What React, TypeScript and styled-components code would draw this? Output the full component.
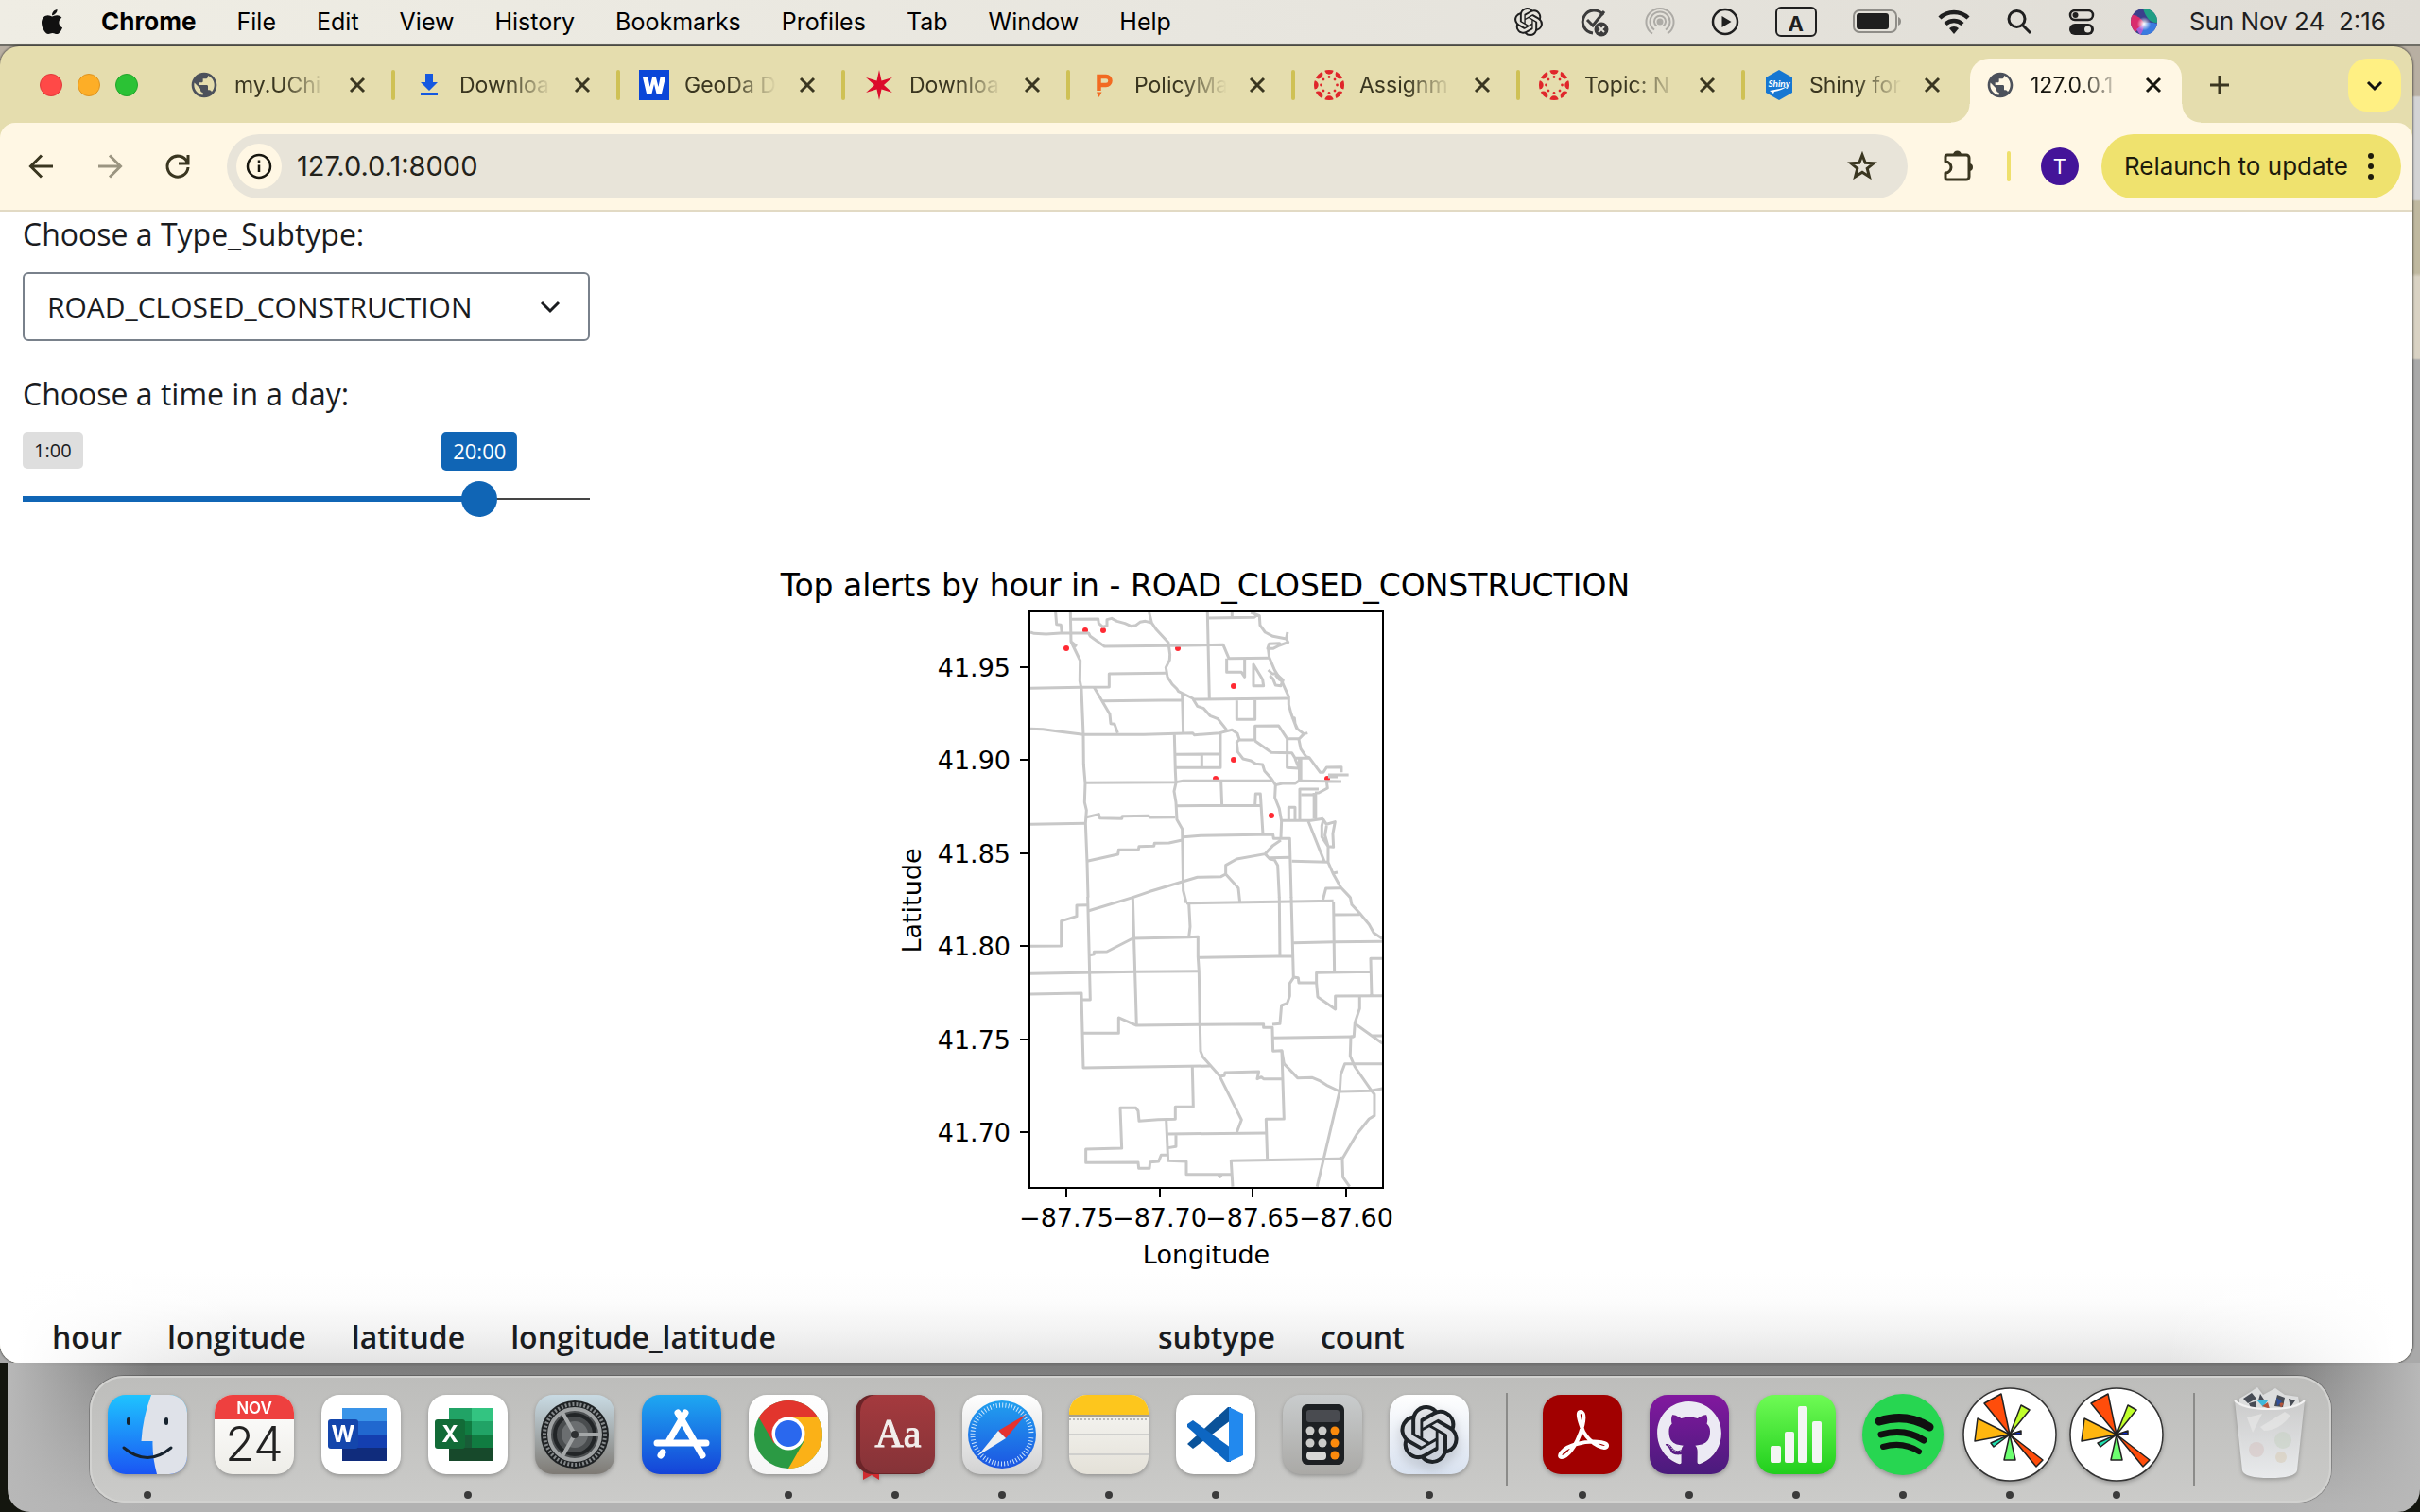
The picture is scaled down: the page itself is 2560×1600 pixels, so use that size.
import React, { useState } from "react";
import styled, { createGlobalStyle, css } from "styled-components";
import { FaApple, FaGithub } from "react-icons/fa";
import { SiOpenai } from "react-icons/si";
import { MdPublic } from "react-icons/md";

const ui = `Inter, "Liberation Sans", sans-serif`;
const body = `"Open Sans", "Noto Sans", sans-serif`;
const plotFont = `"DejaVu Sans", sans-serif`;

const GlobalStyle = createGlobalStyle`
  *, *::before, *::after { box-sizing: border-box; }
  body { margin: 0; font-family: ${ui}; color: #111; }
  button { font: inherit; color: inherit; border: 0; background: none; padding: 0; }
  svg { display: block; }
`;

/* ---------- desktop ---------- */

const Desktop = styled.div`
  min-height: 100vh;
  display: flex;
  flex-direction: column;
  background: #a9a9a9;
`;

const MenuBar = styled.header`
  flex: none;
  height: 49px;
  display: flex;
  align-items: center;
  justify-content: space-between;
  padding: 0 36px 2px 40px;
  border-bottom: 2px solid #6f6e66;
  background: linear-gradient(to right, #efede4, #e8e6df 50%, #dfdcd5);
  font-size: 25px;
  line-height: 32px;
`;

const MenuList = styled.nav`
  display: flex;
  align-items: center;
  gap: 43px;
`;

const AppleMenu = styled.button`
  margin-right: -6px;
`;

const MenuItem = styled.button<{ $bold?: boolean }>`
  font-size: ${(p) => (p.$bold ? 26 : 25)}px;
  font-weight: ${(p) => (p.$bold ? 700 : 400)};
  color: #000;
`;

const StatusList = styled.div`
  display: flex;
  align-items: center;
  gap: 38px;
  color: #1f1f1f;
`;

const Clock = styled.time`
  margin-left: -4px;
  font-size: 26px;
  white-space: pre;
`;

const InputSource = styled.span`
  width: 44px;
  height: 32px;
  border: 2px solid #1f1f1f;
  border-radius: 6px;
  display: grid;
  place-items: center;
  font-size: 22px;
  font-weight: 700;
`;

const WindowRow = styled.div`
  flex: 1;
  min-height: 0;
  display: flex;
  background: linear-gradient(to bottom, #b8afa2 0, #b8afa2 52px, #d3d3d4 54px, #d3d3d4 162px, #bfb89f 164px, #bfb89f 240px, #d9d2c3 244px, #d9d2c3 330px, #a9a9a9 332px);
`;

const BrowserWindow = styled.main`
  flex: 1;
  min-width: 0;
  margin-right: 8px;
  display: flex;
  flex-direction: column;
  border-radius: 20px;
  overflow: hidden;
  background: #e5ddae;
  box-shadow: 0 0 2px 1px rgba(0, 0, 0, 0.45);
`;

/* ---------- tab strip ---------- */

const TabStrip = styled.div`
  flex: none;
  height: 81px;
  display: flex;
  align-items: center;
  padding: 0 12px 0 42px;
`;

const Lights = styled.div`
  display: flex;
  gap: 16px;
  width: 138px;
`;

const Light = styled.button<{ $color: string; $edge: string }>`
  width: 24px;
  height: 24px;
  border-radius: 50%;
  background: ${(p) => p.$color};
  border: 1px solid ${(p) => p.$edge};
`;

const Tab = styled.div<{ $active?: boolean }>`
  position: relative;
  display: flex;
  align-items: center;
  flex: none;
  height: 68px;
  gap: 16px;
  color: #3a3620;
  ${(p) =>
    p.$active
      ? css`
          align-self: flex-end;
          padding: 0 10px 12px 16px;
          background: #fff7e4;
          border-radius: 20px 20px 0 0;
          color: #17160f;
          &::before,
          &::after {
            content: "";
            position: absolute;
            bottom: 0;
            width: 20px;
            height: 20px;
          }
          &::before {
            right: 100%;
            background: radial-gradient(circle at 0 0, transparent 19px, #fff7e4 20px);
          }
          &::after {
            left: 100%;
            background: radial-gradient(circle at 100% 0, transparent 19px, #fff7e4 20px);
          }
        `
      : css`
          padding-left: 20px;
        `}
`;

const TabTitle = styled.span`
  width: 100px;
  overflow: hidden;
  white-space: nowrap;
  font-size: 23px;
  line-height: 32px;
  mask-image: linear-gradient(to right, #000 50px, transparent 98px);
`;

const TabClose = styled.button`
  width: 32px;
  height: 32px;
  margin: 0 4px 0 -2px;
  display: grid;
  place-items: center;
`;

const Divider = styled.span<{ $color: string }>`
  flex: none;
  width: 4px;
  height: 32px;
  border-radius: 2px;
  background: ${(p) => p.$color};
`;

const NewTab = styled.button`
  margin-left: 24px;
  width: 32px;
  height: 32px;
  display: grid;
  place-items: center;
  color: #3a3620;
`;

const TabSearch = styled.button`
  margin-left: auto;
  width: 56px;
  height: 56px;
  border-radius: 20px;
  background: #fff083;
  display: grid;
  place-items: center;
`;

/* ---------- toolbar ---------- */

const Toolbar = styled.div`
  flex: none;
  display: flex;
  align-items: center;
  height: 94px;
  padding: 0 12px 0 24px;
  background: #fff7e4;
  border-bottom: 2px solid #e2dac4;
  border-radius: 16px 16px 0 0;
  color: #3a3620;
`;

const NavButtons = styled.div`
  display: flex;
  gap: 32px;
  margin-right: 32px;
`;

const IconButton = styled.button<{ $dim?: boolean }>`
  width: 40px;
  height: 40px;
  display: grid;
  place-items: center;
  opacity: ${(p) => (p.$dim ? 0.5 : 1)};
`;

const AddressBar = styled.div`
  flex: 1;
  min-width: 0;
  height: 68px;
  border-radius: 34px;
  background: #e8e4d9;
  display: flex;
  align-items: center;
  gap: 16px;
  padding: 0 28px 0 10px;
`;

const SiteInfo = styled.button`
  width: 48px;
  height: 48px;
  border-radius: 50%;
  background: #fff7e4;
  color: #17160f;
  display: grid;
  place-items: center;
`;

const Url = styled.input`
  flex: 1;
  min-width: 0;
  border: 0;
  outline: 0;
  padding: 0;
  background: none;
  color: #23221b;
  font-family: ${ui};
  font-size: 29px;
  line-height: 36px;
`;

const ToolbarEnd = styled.div`
  display: flex;
  align-items: center;
  gap: 32px;
  padding: 0 24px 0 33px;
`;

const Avatar = styled.button`
  width: 40px;
  height: 40px;
  border-radius: 50%;
  background: #441499;
  color: #fff;
  font-size: 22px;
`;

const Relaunch = styled.button`
  height: 68px;
  border-radius: 34px;
  background: #efe26e;
  color: #1d1b0c;
  display: flex;
  align-items: center;
  gap: 20px;
  padding: 0 28px 0 24px;
  font-size: 26px;
  line-height: 36px;
  white-space: nowrap;
`;

/* ---------- page ---------- */

const Page = styled.section`
  flex: 1;
  min-height: 0;
  overflow: hidden;
  background:
    linear-gradient(to right, #fff 20px, transparent 260px),
    linear-gradient(to left, #fff 20px, transparent 260px),
    linear-gradient(to top, #e4e4e4 0, #f2f2f2 32px, #fcfcfc 64px, #fff 96px);
  font-family: ${body};
  color: #1a1c1f;
`;

const Controls = styled.form`
  width: 600px;
  max-width: 100%;
  margin: 0 24px;
  display: flex;
  flex-direction: column;
`;

const FieldLabel = styled.label`
  font-size: 32px;
  line-height: 48px;
  margin-bottom: 16px;
`;

const SelectBox = styled.div`
  display: grid;
  align-items: center;
  margin-bottom: 32px;
  & > * {
    grid-area: 1 / 1;
  }
  svg {
    justify-self: end;
    margin-right: 30px;
    pointer-events: none;
  }
`;

const Select = styled.select`
  appearance: none;
  width: 100%;
  height: 73px;
  padding: 0 72px 0 24px;
  border: 2px solid #79818b;
  border-radius: 6px;
  background: #fff;
  color: #1a1c1f;
  font-family: ${body};
  font-size: 30px;
`;

const Bubbles = styled.div`
  position: relative;
  height: 41px;
  margin-bottom: 11px;
`;

const Bubble = styled.output<{ $value?: boolean }>`
  display: inline-block;
  border-radius: 5px;
  padding: 0 12px;
  ${(p) =>
    p.$value
      ? css`
          position: absolute;
          top: 0;
          transform: translateX(-50%);
          background: #1065b5;
          color: #fff;
          font-size: 22px;
          line-height: 41px;
        `
      : css`
          vertical-align: top;
          background: #dedede;
          font-size: 20px;
          line-height: 39px;
        `}
`;

const Range = styled.input<{ $fill: number }>`
  appearance: none;
  width: 100%;
  height: 38px;
  margin: 0;
  background:
    linear-gradient(#1065b5, #1065b5) left center / ${(p) => p.$fill}% 6px no-repeat,
    linear-gradient(#454545, #454545) center / 100% 2px no-repeat;
  &::-webkit-slider-thumb {
    appearance: none;
    width: 38px;
    height: 38px;
    border-radius: 50%;
    background: #1065b5;
  }
`;

const Plot = styled.svg`
  width: 952px;
  max-width: 100%;
  margin: 42px auto;
  font-family: ${plotFont};
  font-size: 27px;
`;

const Table = styled.table`
  margin-left: 31px;
  border-collapse: collapse;
  font-size: 32px;
  line-height: 48px;
`;

const Th = styled.th<{ $wide?: boolean }>`
  padding: 0 24px;
  font-weight: 600;
  text-align: right;
  ${(p) => p.$wide && "width: 528px;"}
`;

/* ---------- dock ---------- */

const DockArea = styled.footer`
  flex: none;
  padding-left: 8px;
  background: #14160f;
`;

const Backdrop = styled.div`
  height: 158px;
  display: flex;
  align-items: flex-end;
  justify-content: center;
  padding: 0 8px 10px 0;
  border-radius: 0 0 24px 24px;
  background:
    linear-gradient(to right, #b8b8b8 0, transparent 150px),
    linear-gradient(to left, #b8b8b8 0, transparent 150px),
    linear-gradient(to bottom, #6c6c6c 0, #7c7c7c 4px, #808080 16px, #b2b2b2 150px);
`;

const DockBar = styled.div`
  display: flex;
  height: 134px;
  padding: 0 8px 0 5px;
  border-radius: 36px;
  background: linear-gradient(to bottom, #bdbdbb, #cbcbc9);
  box-shadow: inset 0 0 0 2px #d2d2d0, 0 0 0 1px rgba(0, 0, 0, 0.22);
`;

const DockSlot = styled.button<{ $running?: boolean }>`
  width: 113px;
  display: flex;
  flex-direction: column;
  align-items: center;
  justify-content: space-between;
  padding: 20px 0 4px;
  &::after {
    content: "";
    width: 8px;
    height: 8px;
    border-radius: 50%;
    background: ${(p) => (p.$running ? "#3a3a3a" : "transparent")};
  }
  svg {
    overflow: visible;
    filter: drop-shadow(0 2px 2px rgba(0, 0, 0, 0.25));
  }
`;

const DockRule = styled.span`
  width: 2px;
  height: 98px;
  margin: 18px 23px 0 24px;
  background: #8b8b89;
`;

/* ---------- small icons ---------- */

const Stroke = ({ d, size, w = 3, box = 32 }: { d: string; size: number; w?: number; box?: number }) => (
  <svg width={size} height={size} viewBox={`0 0 ${box} ${box}`} fill="none" stroke="currentColor" strokeWidth={w}>
    <path d={d} />
  </svg>
);

const CloseIcon = () => <Stroke size={32} d="M9 9 L23 23 M23 9 L9 23" />;

const GlobeMark = styled(MdPublic)`
  flex: none;
  width: 32px;
  height: 32px;
  color: #4c515b;
`;

const DownloadIcon = () => (
  <svg width="32" height="32" viewBox="0 0 32 32" fill="#1558e0">
    <path d="M12 4h8v9h5l-9 9-9-9h5zM7 24h18v3H7z" />
  </svg>
);

const GeoIcon = () => (
  <svg width="32" height="32" viewBox="0 0 32 32">
    <rect width="32" height="32" fill="#0b46d8" />
    <path d="M4 8H9.500L11.500 18L14 8H18L20.500 18L22.500 8H28L24 25H18.500L16 15L13.500 25H8Z" fill="#fff" />
  </svg>
);

const StarFavicon = () => (
  <svg width="32" height="32" viewBox="0 0 32 32" fill="#dc0b2c">
    <path d="M16 0 L18.500 11.500 L29.900 8 L21 16 L29.900 24 L18.500 20.500 L16 32 L13.500 20.500 L2.100 24 L11 16 L2.100 8 L13.500 11.500Z" />
  </svg>
);

const PolicyIcon = () => (
  <svg width="32" height="32" viewBox="0 0 32 32">
    <path d="M10.500 22V7H18a4.500 4.500 0 0 1 0 9h-6" fill="none" stroke="#f26a21" strokeWidth="4.500" />
    <path d="M8 23.500h5.500L10.500 29z" fill="#f26a21" />
  </svg>
);

const CanvasIcon = ({ id }: { id: string }) => (
  <svg width="32" height="32" viewBox="0 0 32 32" fill="#e0262b">
    <clipPath id={id}>
      <circle cx="16" cy="16" r="16" />
    </clipPath>
    <g clipPath={`url(#${id})`}>
      {[0, 45, 90, 135, 180, 225, 270, 315].map((a) => (
        <g key={a} transform={`rotate(${a} 16 16)`}>
          <circle cx="16" cy="0" r="4.700" />
          <circle cx="16" cy="7.500" r="1.400" />
        </g>
      ))}
    </g>
  </svg>
);

const ShinyIcon = () => (
  <svg width="32" height="32" viewBox="0 0 32 32">
    <path d="M16 0 L30 8 V24 L16 32 L2 24 V8Z" fill="#1677d2" />
    <text x="16" y="18" fontSize="10" fontStyle="italic" fontWeight="700" fill="#fff" textAnchor="middle" fontFamily="Lato, sans-serif">
      Shiny
    </text>
    <path d="M6 22 Q16 21 26 17 Q18 22 11 23 L10 25Z" fill="#fff" />
  </svg>
);

const PuzzleIcon = () => (
  <svg width="40" height="40" viewBox="0 0 40 40" fill="none" stroke="currentColor" strokeWidth="3">
    <path d="M9 8H29a3 3 0 0 1 3 3V31a3 3 0 0 1-3 3H9a2 2 0 0 1-2-2V27a6 6 0 0 0 0-12V10a2 2 0 0 1 2-2Z" strokeLinejoin="round" />
    <path d="M15 8a4.500 4.500 0 0 1 9 0zM32 17a4 4 0 0 1 0 8z" fill="currentColor" stroke="none" />
  </svg>
);

const GrammarIcon = () => (
  <svg width="32" height="32" viewBox="0 0 32 32" fill="none" stroke="#3c3c3c" strokeWidth="3">
    <path d="M26 9A12 12 0 1 0 15 28" />
    <path d="M9 14l6 6L27 5" />
    <circle cx="24" cy="24" r="7.500" fill="#3c3c3c" stroke="none" />
    <path d="M21 21l6 6M27 21l-6 6" stroke="#e3e1da" strokeWidth="2" />
  </svg>
);

const AirdropIcon = () => (
  <svg width="32" height="32" viewBox="0 0 32 32" fill="none" stroke="#adaba6" strokeWidth="2">
    <circle cx="16" cy="16" r="2.500" fill="#adaba6" />
    <path d="M12.500 20.500a6 6 0 1 1 7 0M10 24.500a10.500 10.500 0 1 1 12 0M8 28.500a14.500 14.500 0 1 1 16 0" />
  </svg>
);

const PlayIcon = () => (
  <svg width="30" height="30" viewBox="0 0 30 30">
    <circle cx="15" cy="15" r="13" fill="none" stroke="#1f1f1f" strokeWidth="2.500" />
    <path d="M11.500 9 L21.500 15 L11.500 21Z" fill="#1f1f1f" />
  </svg>
);

const BatteryIcon = () => (
  <svg width="52" height="26" viewBox="0 0 52 26">
    <rect x="1" y="1" width="45" height="23" rx="6" fill="none" stroke="#8f8d88" strokeWidth="2" />
    <rect x="4" y="4" width="34" height="17" rx="3" fill="#1f1f1f" />
    <path d="M48 8q3 1 3 4.500t-3 4.500z" fill="#8f8d88" />
  </svg>
);

const WifiIcon = () => (
  <svg width="34" height="26" viewBox="0 0 34 26" fill="none" stroke="#1f1f1f" strokeWidth="4.500">
    <path d="M2 9a21.500 21.500 0 0 1 30 0M8 15.500a13 13 0 0 1 18 0" />
    <path d="M17 26l-5-6a7 7 0 0 1 10 0z" fill="#1f1f1f" stroke="none" />
  </svg>
);

const ControlIcon = () => (
  <svg width="28" height="28" viewBox="0 0 28 28">
    <rect x="2" y="2" width="24" height="10" rx="5" fill="none" stroke="#1f1f1f" strokeWidth="2.500" />
    <circle cx="7.500" cy="7" r="3" fill="#1f1f1f" />
    <rect x="1" y="16" width="26" height="12" rx="6" fill="#1f1f1f" />
    <circle cx="20.500" cy="22" r="3.500" fill="#e3e1da" />
  </svg>
);

const SiriIcon = () => (
  <svg width="28" height="28" viewBox="0 0 28 28">
    <defs>
      <radialGradient id="siri-glow" cx=".5" cy=".55" r=".3">
        <stop offset="0" stopColor="#fff" />
        <stop offset="1" stopColor="#fff" stopOpacity="0" />
      </radialGradient>
      <clipPath id="siri-clip">
        <circle cx="14" cy="14" r="14" />
      </clipPath>
    </defs>
    <g clipPath="url(#siri-clip)">
      <rect width="28" height="28" fill="#3b3f8c" />
      <path d="M13 0H28V15Q18 16 13 0Z" fill="#1f9e84" />
      <path d="M0 6Q10 8 14 15Q8 22 4 26L0 20Z" fill="#d92c6c" />
      <path d="M14 15Q22 14 28 16V28H12Q8 24 14 15Z" fill="#3a7be0" />
      <path d="M6 22Q12 18 14 15Q14 24 10 28Z" fill="#a95bd6" />
      <circle cx="14" cy="15" r="12" fill="url(#siri-glow)" />
    </g>
  </svg>
);

/* ---------- dock icons ---------- */

const Grad = ({ id, a, b }: { id: string; a: string; b: string }) => (
  <linearGradient id={id} x1="0" y1="0" x2="0" y2="1">
    <stop offset="0" stopColor={a} />
    <stop offset="1" stopColor={b} />
  </linearGradient>
);

const Tile = ({ id, a, b, children }: { id: string; a: string; b: string; children?: React.ReactNode }) => (
  <svg width="84" height="84" viewBox="0 0 84 84">
    <defs>
      <Grad id={`${id}-bg`} a={a} b={b} />
      <clipPath id={`${id}-clip`}>
        <rect width="84" height="84" rx="19" />
      </clipPath>
    </defs>
    <rect width="84" height="84" rx="19" fill={`url(#${id}-bg)`} />
    <g clipPath={`url(#${id}-clip)`}>{children}</g>
  </svg>
);

const Finder = () => (
  <Tile id="finder" a="#1fc4ff" b="#1a55f3">
    <path d="M46 0 Q37 24 35.500 49 H47.500 Q47 66 52 84 H84 V0Z" fill="#dfe2e9" />
    <path d="M22 26v4M62 26v4" stroke="#16222e" strokeWidth="4" strokeLinecap="round" />
    <path d="M17 56 Q42 77 67 56" fill="none" stroke="#16222e" strokeWidth="3" strokeLinecap="round" />
  </Tile>
);

const Calendar = () => (
  <Tile id="cal" a="#ffffff" b="#eeede8">
    <rect width="84" height="26" fill="#ee403f" />
    <text x="42" y="20" fontSize="17" fontWeight="600" fill="#fff" textAnchor="middle">NOV</text>
    <text x="42" y="70" fontSize="50" fontWeight="300" fill="#222" textAnchor="middle">24</text>
  </Tile>
);

const officeRows: Record<string, [string, string][]> = {
  W: [
    ["#3a94e8", "#3a94e8"],
    ["#2168cf", "#2168cf"],
    ["#143fb0", "#143fb0"],
    ["#102c7c", "#102c7c"],
  ],
  X: [
    ["#21a366", "#33c481"],
    ["#107c41", "#21a366"],
    ["#185c37", "#107c41"],
    ["#17492b", "#17492b"],
  ],
};

const Office = ({ letter, badge }: { letter: string; badge: string }) => (
  <Tile id={`office-${letter}`} a="#ffffff" b="#ffffff">
    {officeRows[letter].map(([left, right], i) => (
      <g key={left}>
        <rect x="22" y={14 + i * 14} width="24" height="14" fill={left} />
        <rect x="46" y={14 + i * 14} width="23" height="14" fill={right} />
      </g>
    ))}
    <rect x="7" y="26" width="32" height="31" rx="3" fill={badge} />
    <text x="23" y="50" fontSize="24" fontWeight="700" fill="#fff" textAnchor="middle">{letter}</text>
  </Tile>
);

const Settings = () => (
  <Tile id="settings" a="#c9dbe4" b="#7e7a74">
    <circle cx="42" cy="42" r="36" fill="#1f2224" />
    <circle cx="42" cy="42" r="32" fill="none" stroke="#85898b" strokeWidth="4" strokeDasharray="2 2" />
    <circle cx="42" cy="42" r="27" fill="#4a4d4f" stroke="#9fa2a3" strokeWidth="4" />
    <circle cx="42" cy="42" r="21" fill="none" stroke="#222527" strokeWidth="4" />
    <circle cx="42" cy="42" r="14" fill="#6b6e70" />
    <path d="M42 42H69M42 42L29 19M42 42L29 65" stroke="#a4a7a8" strokeWidth="4" />
    <circle cx="42" cy="42" r="4" fill="#2e3032" />
  </Tile>
);

const AppStore = () => (
  <Tile id="store" a="#1ea9f2" b="#1543d8">
    <g stroke="#fff" strokeWidth="7" strokeLinecap="round">
      <path d="M46 19L29 48M38 19L64 64M16 51H68M22 61L20 64" />
    </g>
  </Tile>
);

const Chrome = () => (
  <Tile id="chrome" a="#ffffff" b="#f6f6f6">
    <circle cx="42" cy="42" r="36" fill="#2b9a44" />
    <path d="M42 42L10.800 24A36 36 0 0 1 73.200 24Z" fill="#e2352d" />
    <path d="M42 24H73.200A36 36 0 0 1 42 78L58 50Z" fill="#fbb117" />
    <path d="M10.800 24L26.500 51L42 42L42 24Z" fill="#e2352d" />
    <circle cx="42" cy="41" r="17.500" fill="#fff" />
    <circle cx="42" cy="41" r="14" fill="#2a68ee" />
  </Tile>
);

const Dictionary = () => (
  <svg width="84" height="84" viewBox="0 0 84 84">
    <defs>
      <Grad id="dict" a="#a53a3e" b="#853338" />
    </defs>
    <path d="M8 74h17v16l-8-5-9 5z" fill="#d02b2f" />
    <rect width="82" height="84" rx="18" fill="#6b2428" />
    <rect x="5" width="79" height="83" rx="18" fill="url(#dict)" />
    <text x="45" y="55" fontSize="42" fill="#f2eeec" stroke="#f2eeec" textAnchor="middle" fontFamily="Liberation Serif, serif">Aa</text>
  </svg>
);

const Safari = () => (
  <Tile id="safari" a="#ffffff" b="#d2d2d2">
    <defs>
      <Grad id="safari-dial" a="#21a0ef" b="#1c55e2" />
    </defs>
    <circle cx="42" cy="42" r="36" fill="url(#safari-dial)" />
    <circle cx="42" cy="42" r="31" fill="none" stroke="#cfe6fb" strokeWidth="5" strokeDasharray="1 2.246" />
    <path d="M67 21L38 38L46 46Z" fill="#e5322f" />
    <path d="M17 64L38 38L46 46Z" fill="#eef0f2" />
  </Tile>
);

const Notes = () => (
  <Tile id="notes" a="#f8f8f6" b="#e4e1d8">
    <rect width="84" height="21" fill="#fdc61d" />
    <path d="M0 22H84" stroke="#a8a18c" strokeWidth="2" />
    <path d="M0 26H84" stroke="#b9b9b7" strokeWidth="2" strokeDasharray="2 2" />
    <path d="M0 42H84M0 63H84" stroke="#cfcfcd" strokeWidth="2" />
  </Tile>
);

const VsCode = () => (
  <Tile id="code" a="#ffffff" b="#ffffff">
    <path d="M12 52L18 57L58 27V13L55 13Z" fill="#0a5299" />
    <path d="M12 31L18 27L58 56V71L54 71L12 34Z" fill="#0d66c2" />
    <path d="M56 13L71 20V64L56 71Z" fill="#2289ee" />
  </Tile>
);

const Calculator = () => (
  <Tile id="calc" a="#c9cccd" b="#aaa9a6">
    <rect x="20" y="10" width="45" height="64" rx="6" fill="#1d2023" />
    <rect x="25" y="16" width="35" height="13" rx="3" fill="#494b50" />
    {[38, 51, 64].map((y, r) =>
      [29, 42, 55].map((x, c) =>
        r === 2 && c < 2 ? null : <circle key={`${x}-${y}`} cx={x} cy={y} r="4.500" fill={c === 2 ? "#fb8a0c" : "#cbcbc9"} />
      )
    )}
    <rect x="25" y="60" width="21" height="9" rx="4" fill="#d8d8d6" />
  </Tile>
);

const ChatGpt = () => (
  <Tile id="gpt" a="#ffffff" b="#d9e2f0">
    <SiOpenai x="11" y="11" size={62} color="#1e2327" />
  </Tile>
);

const Acrobat = () => (
  <Tile id="pdf" a="#a10000" b="#a10000">
    <path
      d="M43 39C38 26 36 18 40 18C45 18 44 28 40 40C35 54 26 66 20 66C15 66 20 56 36 52C50 48 69 49 68 54C67 59 52 54 43 39Z"
      fill="none"
      stroke="#fff"
      strokeWidth="4"
      strokeLinejoin="round"
    />
  </Tile>
);

const GitHub = () => (
  <Tile id="gh" a="#82189f" b="#4a1b7c">
    <FaGithub x="7" y="6" size={70} color="#eceaf4" />
  </Tile>
);

const Numbers = () => (
  <Tile id="num" a="#6ffb55" b="#21cf1d">
    <g fill="#f3f6f3">
      <rect x="15" y="54" width="11" height="18" rx="2" />
      <rect x="30" y="39" width="10" height="33" rx="2" />
      <rect x="44" y="12" width="10" height="60" rx="2" />
      <rect x="59" y="28" width="10" height="44" rx="2" />
    </g>
  </Tile>
);

const Spotify = () => (
  <svg width="84" height="84" viewBox="0 0 84 84">
    <circle cx="42" cy="42" r="43" fill="#27d651" />
    <g fill="none" stroke="#101010" strokeLinecap="round">
      <path d="M17 28Q46 19 70 34" strokeWidth="9" />
      <path d="M19 42Q44 35 64 48" strokeWidth="7" />
      <path d="M21 55Q42 49 59 60" strokeWidth="6" />
    </g>
  </svg>
);

const wheelWedges: [string, string][] = [
  ["#ff4d0b", "-27,-33 -9,-43"],
  ["#c0ff2a", "12,-31 21,-26"],
  ["#ffb60f", "-34,-17 -37,7"],
  ["#0a2bd8", "12,-4 12,0"],
  ["#1fe0b0", "-20,9 -17,13"],
  ["#6dff70", "-6,27 6,27"],
  ["#ff4d0b", "35,27 28,34"],
];

const Wheel = () => (
  <svg width="84" height="84" viewBox="-42 -42 84 84">
    <circle r="49" fill="#fff" stroke="#333" strokeWidth="1.500" />
    {wheelWedges.map(([c, p]) => (
      <polygon key={p} points={`0,0 ${p}`} fill={c} stroke="#222" strokeWidth="1.500" strokeLinejoin="round" />
    ))}
  </svg>
);

const Trash = () => (
  <svg width="84" height="84" viewBox="0 0 84 84">
    <defs>
      <Grad id="bin" a="#cfcfcf" b="#eef0f2" />
    </defs>
    <path d="M10 4L20 -2L29 -8L35 0L48 -7L58 0L72 2L74 12L60 15H22L10 12Z" fill="#dcdddd" />
    <path d="M14 4l9-6 5 6-9 5zM50 0l8 3-2 10-9-1zM62 4l7 2-5 7zM20 9l7-2 1 8-6-1zM32 -1l4 6-6 1z" fill="#474c55" />
    <path d="M28 5l12 1-5 7z" fill="#3fb9dc" />
    <path d="M34 12l6-4 2 7zM52 8l5 1-3 5z" fill="#b2543c" />
    <path d="M49 3l6 4-5 5z" fill="#2f4f9a" />
    <path d="M5 6Q14 15 42 15Q70 15 79 6L71 80Q69 88 42 88Q15 88 13 80Z" fill="url(#bin)" opacity=".93" />
    <path d="M5 6Q14 15 42 15Q70 15 79 6" fill="none" stroke="#f2f2f2" strokeWidth="2" />
    <path d="M32 34L58 18L64 22Q52 38 36 38ZM18 24L34 20L24 40Z" fill="#e4e4e4" opacity=".8" />
    <circle cx="28" cy="58" r="8" fill="#d4bfbd" opacity=".5" />
    <circle cx="56" cy="48" r="9" fill="#c3cfc0" opacity=".5" />
    <circle cx="54" cy="66" r="6" fill="#d5c7b0" opacity=".5" />
  </svg>
);

/* ---------- chart ---------- */

const northPaths = [
  "M140,57L143,95L157,97L160,124",
  "M187,57L189,150L207,165M189,150L218,210L217,275L222,300L228,445L229,540L234,600L232,660L238,685L235,727L240,850L243,962",
  "M60,120L72,124L110,126L155,123L245,123L250,133L295,165L500,163L672,160L690,203L818,202",
  "M187,79L275,78L277,92L290,103L303,100L303,80L318,76L335,85L360,92L380,101L395,98L408,88L425,85L445,90",
  "M437,57L445,90L460,112L498,153L503,190L502,208L490,232L495,262L510,285L525,300L530,308L545,315L575,330L590,355L610,362L630,385L655,395L683,430",
  "M622,57L628,332M622,75L770,73L778,67L787,68M700,57V73",
  "M760,57L787,68L789,98L805,120L830,133L872,141L876,120M872,141L878,152L850,162L830,172L813,172L818,157L850,155L855,160M815,175L818,200L835,240L860,280L880,325L880,350L888,380L905,425L928,443L940,440M888,390L898,392L900,410L908,428",
  "M928,443L912,460L918,490L935,515L945,518L980,565L990,565L1000,549L1047,548V565M1070,573H1005M1005,579H1035",
  "M683,203V247L730,247L740,262V207M768,222V290L800,290L797,270Z",
  "M815,240L828,252L840,252L862,272L855,290L838,288L830,268L820,258M838,256L850,270L862,275",
  "M60,298L220,295L310,294V252L490,250",
  "M262,295L312,380L315,410L327,412L337,440",
  "M285,338L542,335M542,315L545,440M575,333L880,330M715,335V397L773,397V335",
  "M60,427L100,428L150,435L228,445L420,445L575,440L580,446L660,440L700,430L717,442L723,460L715,470L718,500L735,522L760,528L775,538L797,540L803,560L825,585L838,605L836,645L850,680L857,720L855,775",
  "M517,445L520,560L522,598L516,625L522,660L525,715L542,745L545,940L555,980",
  "M663,440V550L520,550M520,508L663,506M604,508V550",
  "M234,598L522,596L545,592L830,592M665,592L668,670M525,671L790,670M773,670L775,633L790,633L798,760",
  "M235,708L277,698L280,710L350,712L352,704L435,703L440,708L520,707M60,730L235,727",
  "M545,770L600,766L830,762L832,775L883,775L888,962",
  "M240,847L338,825L340,811L403,810L405,800L452,799L454,790L500,789L542,780",
  "M243,1005L385,962L440,943L590,898L665,896L680,888L720,932L725,978M680,888L680,860L715,840L805,824L830,797L855,780",
  "M805,824L820,840L835,843L845,860L850,962M820,836L883,835",
  "M555,980L890,975L1022,973",
  "M723,462L773,462L773,418L848,417L875,458L912,458M773,465L825,502L890,503L900,520L945,520M875,460V550L910,552M900,522L912,550",
  "M838,605L860,600L900,600L912,592L1000,593L1047,594M1000,593L1003,615L975,630L963,630",
  "M915,715V618L975,618M920,636L965,636M880,717V676L900,676V717M858,718L950,718L990,712",
  "M942,720L993,848M890,847L1005,850",
  "M990,715L1000,730L1027,722L1020,760L1022,802L1005,800L985,770L985,735ZM1000,735L995,765L1005,800L1005,850L1020,885L1035,882M1020,885L1045,930L1075,962",
  "M988,972L998,933L1045,932",
];

const southPaths = [
  "M242,0L250,327L222,327",
  "M60,157L158,156V77L207,62L207,27L242,26",
  "M385,5L392,240L397,408",
  "M248,185L262,182L262,175L303,174L385,132L562,128L592,127L592,190L595,235L598,405L600,490L607,508L660,568L730,708L715,748",
  "M563,20L567,95L563,128",
  "M60,244L395,238L592,236M60,309L222,306L228,543L630,537",
  "M228,433L340,433L340,384L395,408L598,406L800,404V415L828,415L830,490L858,488L865,530",
  "M592,193L890,188M850,0L852,188M888,0L895,255L910,257L912,273L968,273",
  "M828,405L852,403L857,345L875,338L883,315L883,275L895,257",
  "M1022,15L1025,240M1025,57L1105,56M1075,0L1080,25L1105,52L1135,88L1150,115L1177,133",
  "M895,146L1025,143L1177,142",
  "M968,273V241L1140,238M1177,196H1140L1143,313M968,273L972,318L1028,357L1028,315L1177,314",
  "M1105,318L1105,355L1090,400L1087,443L1077,445L1075,505L1090,540L1140,612L1152,627L1152,695L1135,705L1095,755L1050,832L1052,890L1073,920",
  "M830,448L1087,444M1090,403L1177,465M1145,441H1177",
  "M1177,530H1058L1045,565L1042,615L970,920M865,530L908,575L955,574L980,585L1000,598L1042,618L1140,616L1177,609",
  "M858,488L865,705L808,706L812,832",
  "M660,570L675,568L678,558L785,555L780,578L793,572L800,578L862,578",
  "M574,540L577,667L520,667L520,706L465,707L405,712L402,680L395,670L345,670L350,798L236,801L236,844L402,843L404,862L438,862L440,842L467,840L475,820L492,820",
  "M491,707L497,838L555,840L555,881L697,881M655,881L662,889L668,881M497,753L808,750M522,755L522,793L497,797",
  "M702,920L697,838L1040,832L1050,828",
];

const alerts = [
  [-87.75, 41.96], [-87.74, 41.97], [-87.73, 41.97], [-87.69, 41.96], [-87.66, 41.94],
  [-87.66, 41.9], [-87.67, 41.89], [-87.64, 41.87], [-87.61, 41.89],
];
const latTicks = [41.95, 41.9, 41.85, 41.8, 41.75, 41.7];
const lonTicks = [-87.75, -87.7, -87.65, -87.6];
const lonX = (lon: number) => Math.round(328 + (lon + 87.75) * 1972);
const latY = (lat: number) => Math.round(117 + (41.95 - lat) * 1968);

const AlertPlot = ({ subtype }: { subtype: string }) => (
  <Plot viewBox="0 0 952 760" role="img" aria-label="Top alerts map">
    <text x="475" y="42" fontSize="33" textAnchor="middle">Top alerts by hour in - {subtype}</text>
    <g fill="#ff2a33">
      {alerts.map(([lon, lat]) => (
        <circle key={`${lon},${lat}`} cx={lonX(lon)} cy={latY(lat)} r="3" />
      ))}
    </g>
    <g fill="none" stroke="#c8c8c8" strokeWidth="9" strokeLinejoin="round">
      <g transform="translate(270 40) scale(.3333)">
        {northPaths.map((d) => <path key={d} d={d} />)}
        <path d="M916,520V597M963,630V712" strokeWidth="14" />
      </g>
      <g transform="translate(270 360) scale(.3333)">
        {southPaths.map((d) => <path key={d} d={d} />)}
      </g>
    </g>
    <rect x="289" y="58" width="374" height="610" fill="none" stroke="#000" strokeWidth="2" />
    {latTicks.map((v) => (
      <g key={v}>
        <path d={`M279 ${latY(v)}H289`} stroke="#000" strokeWidth="2" />
        <text x="269" y={latY(v) + 10} textAnchor="end">{v.toFixed(2)}</text>
      </g>
    ))}
    {lonTicks.map((v) => (
      <g key={v}>
        <path d={`M${lonX(v)} 668V678`} stroke="#000" strokeWidth="2" />
        <text x={lonX(v)} y="709" textAnchor="middle">{`\u2212${Math.abs(v).toFixed(2)}`}</text>
      </g>
    ))}
    <text x="476" y="748" textAnchor="middle">Longitude</text>
    <text transform="translate(174 364) rotate(-90)" textAnchor="middle">Latitude</text>
  </Plot>
);

/* ---------- data ---------- */

const menus = ["Chrome", "File", "Edit", "View", "History", "Bookmarks", "Profiles", "Tab", "Window", "Help"];

const tabs = [
  { title: "my.UChi", icon: <GlobeMark /> },
  { title: "Downloa", icon: <DownloadIcon /> },
  { title: "GeoDa D", icon: <GeoIcon /> },
  { title: "Downloa", icon: <StarFavicon /> },
  { title: "PolicyMa", icon: <PolicyIcon /> },
  { title: "Assignm", icon: <CanvasIcon id="canvas-a" /> },
  { title: "Topic: N", icon: <CanvasIcon id="canvas-b" /> },
  { title: "Shiny for", icon: <ShinyIcon /> },
];

const apps = [
  { name: "Finder", icon: <Finder />, running: true },
  { name: "Calendar", icon: <Calendar /> },
  { name: "Word", icon: <Office letter="W" badge="#1446ac" /> },
  { name: "Excel", icon: <Office letter="X" badge="#126b37" />, running: true },
  { name: "System Settings", icon: <Settings /> },
  { name: "App Store", icon: <AppStore /> },
  { name: "Chrome", icon: <Chrome />, running: true },
  { name: "Dictionary", icon: <Dictionary />, running: true },
  { name: "Safari", icon: <Safari />, running: true },
  { name: "Notes", icon: <Notes />, running: true },
  { name: "Visual Studio Code", icon: <VsCode />, running: true },
  { name: "Calculator", icon: <Calculator /> },
  { name: "ChatGPT", icon: <ChatGpt />, running: true },
];

const recentApps = [
  { name: "Acrobat", icon: <Acrobat /> },
  { name: "GitHub Desktop", icon: <GitHub /> },
  { name: "Numbers", icon: <Numbers /> },
  { name: "Spotify", icon: <Spotify /> },
  { name: "Figure 1", icon: <Wheel /> },
  { name: "Figure 2", icon: <Wheel /> },
];

export default function App() {
  const [subtype, setSubtype] = useState("ROAD_CLOSED_CONSTRUCTION");
  const [hour, setHour] = useState(20);
  const share = (hour - 1) / 23;

  return (
    <>
      <GlobalStyle />
      <Desktop>
        <MenuBar>
          <MenuList>
            <AppleMenu aria-label="Apple menu"><FaApple size={30} /></AppleMenu>
            {menus.map((m, i) => (
              <MenuItem key={m} $bold={i === 0}>{m}</MenuItem>
            ))}
          </MenuList>
          <StatusList>
            <SiOpenai size={30} />
            <GrammarIcon />
            <AirdropIcon />
            <PlayIcon />
            <InputSource>A</InputSource>
            <BatteryIcon />
            <WifiIcon />
            <Stroke size={28} box={28} w={3} d="M20 11A8.500 8.500 0 1 1 3 11A8.500 8.500 0 1 1 20 11M17.500 17.500L26 26" />
            <ControlIcon />
            <SiriIcon />
            <Clock>{"Sun Nov 24  2:16"}</Clock>
          </StatusList>
        </MenuBar>

        <WindowRow>
          <BrowserWindow>
            <TabStrip>
              <Lights>
                <Light aria-label="Close window" $color="#ff4947" $edge="#e0383a" />
                <Light aria-label="Minimise window" $color="#fdae27" $edge="#de9420" />
                <Light aria-label="Zoom window" $color="#2bc235" $edge="#22a52b" />
              </Lights>
              {tabs.map((t, i) => (
                <Tab key={i}>
                  {t.icon}
                  <TabTitle>{t.title}</TabTitle>
                  <TabClose aria-label={`Close ${t.title}`}><CloseIcon /></TabClose>
                  <Divider $color={i === tabs.length - 1 ? "transparent" : "#cfc155"} />
                </Tab>
              ))}
              <Tab $active>
                <GlobeMark />
                <TabTitle>127.0.0.1</TabTitle>
                <TabClose aria-label="Close tab"><CloseIcon /></TabClose>
              </Tab>
              <NewTab aria-label="New tab"><Stroke size={32} d="M16 6V26M6 16H26" /></NewTab>
              <TabSearch aria-label="Search tabs"><Stroke size={32} d="M9 13L16 20L23 13" /></TabSearch>
            </TabStrip>

            <Toolbar>
              <NavButtons>
                <IconButton aria-label="Back"><Stroke size={40} box={40} d="M32 20H9M20 8.500L8.500 20L20 31.500" /></IconButton>
                <IconButton aria-label="Forward" $dim><Stroke size={40} box={40} d="M8 20H31M20 8.500L31.500 20L20 31.500" /></IconButton>
                <IconButton aria-label="Reload"><Stroke size={40} box={40} d="M30 15.500A11 11 0 1 0 31 21M31 8V17H21" /></IconButton>
              </NavButtons>
              <AddressBar>
                <SiteInfo aria-label="Site information">
                  <svg width="32" height="32" viewBox="0 0 32 32" fill="none" stroke="currentColor" strokeWidth="2.500">
                    <circle cx="16" cy="16" r="12" />
                    <path d="M16 14.500V22M16 9.500V12" />
                  </svg>
                </SiteInfo>
                <Url aria-label="Address" defaultValue="127.0.0.1:8000" />
                <IconButton aria-label="Bookmark">
                  <Stroke size={40} box={40} d="M20 8L23.200 16.300L32 16.800L25.200 22.400L27.400 31L20 26.200L12.600 31L14.800 22.400L8 16.800L16.800 16.300Z" />
                </IconButton>
              </AddressBar>
              <ToolbarEnd>
                <IconButton aria-label="Extensions"><PuzzleIcon /></IconButton>
                <Divider $color="#efe06c" />
                <Avatar>T</Avatar>
              </ToolbarEnd>
              <Relaunch>
                Relaunch to update
                <svg width="8" height="30" viewBox="0 0 8 30" fill="currentColor">
                  <circle cx="4" cy="4" r="3" />
                  <circle cx="4" cy="15" r="3" />
                  <circle cx="4" cy="26" r="3" />
                </svg>
              </Relaunch>
            </Toolbar>

            <Page>
              <Controls>
                <FieldLabel htmlFor="subtype">Choose a Type_Subtype:</FieldLabel>
                <SelectBox>
                  <Select id="subtype" value={subtype} onChange={(e) => setSubtype(e.target.value)}>
                    <option>ROAD_CLOSED_CONSTRUCTION</option>
                  </Select>
                  <Stroke size={24} box={24} w={3} d="M3 7L12 16L21 7" />
                </SelectBox>
                <FieldLabel htmlFor="hour">Choose a time in a day:</FieldLabel>
                <Bubbles>
                  <Bubble>1:00</Bubble>
                  <Bubble $value style={{ left: `calc(19px + (100% - 38px) * ${share})` }}>{hour}:00</Bubble>
                </Bubbles>
                <Range
                  id="hour"
                  type="range"
                  min={1}
                  max={24}
                  value={hour}
                  $fill={Math.round(share * 100)}
                  onChange={(e) => setHour(Number(e.target.value))}
                />
              </Controls>
              <AlertPlot subtype={subtype} />
              <Table>
                <thead>
                  <tr>
                    <Th>hour</Th>
                    <Th>longitude</Th>
                    <Th>latitude</Th>
                    <Th>longitude_latitude</Th>
                    <Th $wide>subtype</Th>
                    <Th>count</Th>
                  </tr>
                </thead>
              </Table>
            </Page>
          </BrowserWindow>
        </WindowRow>

        <DockArea>
          <Backdrop>
            <DockBar>
              {apps.map((a) => (
                <DockSlot key={a.name} aria-label={a.name} $running={a.running}>{a.icon}</DockSlot>
              ))}
              <DockRule />
              {recentApps.map((a) => (
                <DockSlot key={a.name} aria-label={a.name} $running>{a.icon}</DockSlot>
              ))}
              <DockRule />
              <DockSlot aria-label="Trash"><Trash /></DockSlot>
            </DockBar>
          </Backdrop>
        </DockArea>
      </Desktop>
    </>
  );
}
